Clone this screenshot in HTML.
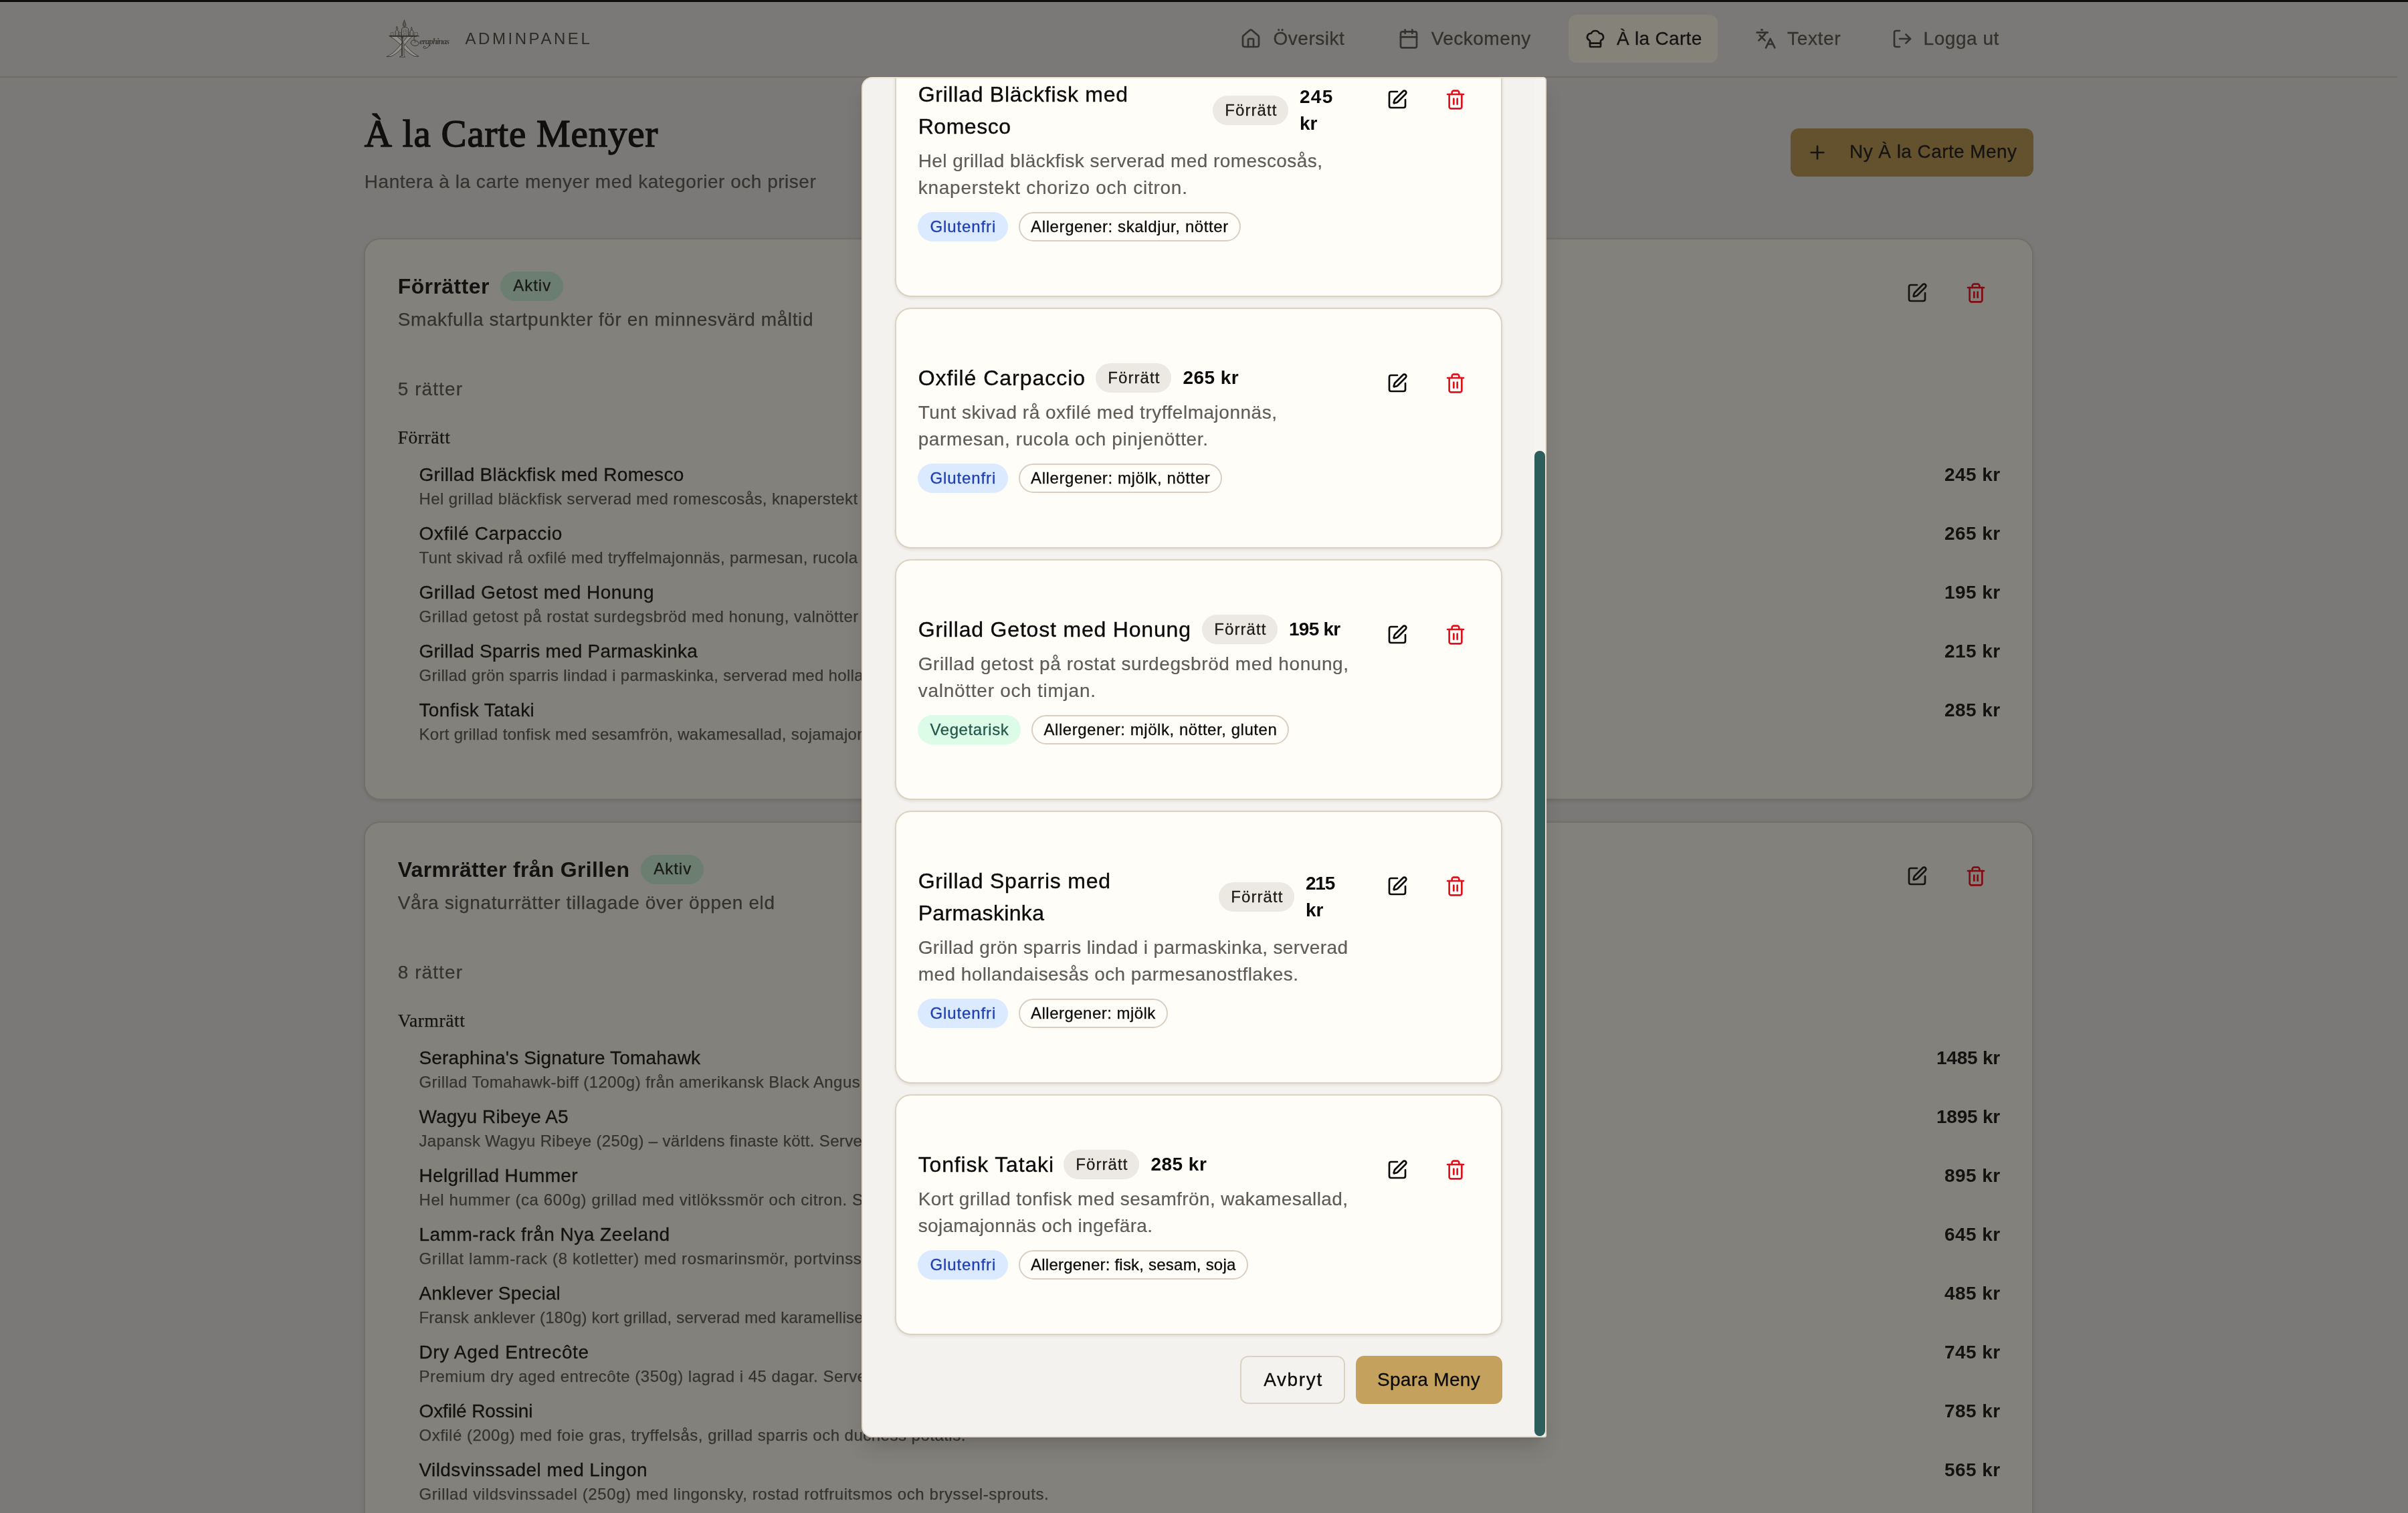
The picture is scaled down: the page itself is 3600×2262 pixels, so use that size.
<!DOCTYPE html>
<html lang="sv"><head><meta charset="utf-8"><title>À la Carte Menyer – Adminpanel</title>
<style>
html,body{margin:0;padding:0}
body{width:3600px;height:2262px;overflow:hidden;position:relative;background:#7a7977}
.s{font-family:"Liberation Sans",sans-serif}
.f{font-family:"Liberation Serif",serif}
#page{position:absolute;left:0;top:0;width:3600px;height:2262px;overflow:hidden;will-change:transform}
#modal{position:absolute;left:1288px;top:115px;width:1024px;height:2034px;box-sizing:border-box;background:#f3f2ef;border:2px solid #e6ddcf;border-radius:16px 5px 3px 16px;box-shadow:0 20px 30px -6px rgba(0,0,0,.15),0 8px 12px -8px rgba(0,0,0,.12);overflow:hidden}
#minner{position:absolute;left:-1290px;top:-117px;width:3600px;height:2262px;will-change:transform}
</style></head><body>
<div id="page"><div style="position:absolute;left:0px;top:0px;width:3600px;height:3px;background:#0e0e0e;z-index:5"></div><header><div style="position:absolute;left:0px;top:114px;width:3584px;height:2px;background:#716c65"></div><svg style="position:absolute;left:570px;top:20px" width="120" height="80" viewBox="0 0 120 80" fill="none" stroke="#2e2c28" stroke-width="0.8" stroke-linecap="round" stroke-linejoin="round">
<g fill="#918f89">
<path d="M12.700 34C19 38 25 43 29.500 47.500C34 52 40 60 50 64.300L56 64.200C47 60 40 52 35.500 46.500C31.500 42 28 38 23.800 34.500Z"/>
<path d="M46.500 34C42 38 38.500 42.500 35 47C30.500 52.500 24 60.500 14 64.500L8 64.700C17 61 24 53 28.800 47C32 43 36 38.500 39.100 34.800Z"/>
<path d="M30.700 44.500V63.300L27.200 65.200H35.800L33.800 63.300V44.500Z"/>
</g>
<path d="M11.800 33.400H55.200M13 34.500H53" stroke-width="0.9"/>
<path d="M31.300 34.500V63.500" stroke-width="1.300"/>
<path d="M30.400 33V24.200C30.400 21.800 32.800 20.800 35.600 20.800C38.400 20.800 40.700 21.800 40.700 24.200V33"/>
<path d="M34.500 10.300C33.200 13.500 32.200 15.500 32.300 17.300C32.400 19.200 33.500 20.100 34.700 20.100C36 20.100 37 19 36.900 17.300C36.800 15.300 35.400 13.500 34.500 10.300Z" fill="#5d5a55" stroke-width="0.7"/>
<path d="M21.100 33V26.500L23.400 24.600L25.900 26.500V33M23.300 19.800C22.600 21.600 22.300 22.900 22.700 23.800C23.100 24.600 24.200 24.600 24.600 23.800C25 22.900 24.300 21.500 23.300 19.800Z"/>
<path d="M43.100 33V26.500L45.400 24.600L47.800 26.500V33M45.200 20.900C44.500 22.500 44.200 23.400 44.600 24.200C45 24.900 46 24.900 46.300 24.200C46.700 23.400 46 22.400 45.200 20.900Z"/>
<path d="M14.300 33V28.600H18V33M49.700 33V28.600H54.500V33M26.800 33V28.500H29.500V33M41.600 33V28.500H42.600M33 24.500V29M36 23.800V27.500M38.400 25V30M33.500 33C33.500 30.500 35 29 36.500 30.500C37.500 31.500 37.800 32.500 37.800 33" stroke-width="0.6" opacity="0.7"/>
<path d="M29.300 34.500L31.200 39.500L33 34.500" fill="#3b3935" stroke-width="0.5"/>
<path d="M56.500 34.200C53 32.500 48 34.500 49 38.200C50 41.500 55.500 41 56 44.500C56.500 48.500 49.500 50 45.800 46.800C43.500 44.700 44.200 41.200 47 40.200C49.800 39.300 51.800 41.600 50.400 43.400M73 45C72.500 48.500 70 51.500 66.500 52.300C64 52.800 62.300 51.300 63.200 49.800C64 48.700 65.700 49 66 50.200" stroke-width="0.9"/>
</svg><span class="f" style="position:absolute;left:627px;top:52.5px;font-size:13px;line-height:18px;font-style:italic;font-weight:700;color:#403d39;letter-spacing:-1.050px;white-space:nowrap">eraphinas</span><span id="t1" class="s" style="position:absolute;left:695.50px;top:41.68px;font-size:24px;line-height:32px;color:#2c2b28;font-weight:400;letter-spacing:3.553px;white-space:nowrap;">ADMINPANEL</span><nav><div style="position:absolute;left:2345px;top:22px;width:223px;height:72px;background:#85827a;border-radius:12px"></div><svg style="position:absolute;left:1854px;top:42px" width="32" height="32" viewBox="0 0 24 24" fill="none" stroke="#34322e" stroke-width="2" stroke-linecap="round" stroke-linejoin="round"><path d="M15 21v-8a1 1 0 0 0-1-1h-4a1 1 0 0 0-1 1v8"/><path d="M3 10a2 2 0 0 1 .709-1.528l7-5.999a2 2 0 0 1 2.582 0l7 5.999A2 2 0 0 1 21 10v9a2 2 0 0 1-2 2H5a2 2 0 0 1-2-2z"/></svg><span id="t2" class="s" style="position:absolute;left:1903.50px;top:38.30px;font-size:28px;line-height:40px;color:#34322e;font-weight:400;letter-spacing:0.515px;white-space:nowrap;-webkit-text-stroke:0.3px #34322e;">Översikt</span><svg style="position:absolute;left:2089.5px;top:42.2px" width="32" height="32" viewBox="0 0 24 24" fill="none" stroke="#34322e" stroke-width="2" stroke-linecap="round" stroke-linejoin="round"><path d="M8 2v4"/><path d="M16 2v4"/><rect width="18" height="18" x="3" y="4" rx="2"/><path d="M3 10h18"/></svg><span id="t3" class="s" style="position:absolute;left:2139.70px;top:38.30px;font-size:28px;line-height:40px;color:#34322e;font-weight:400;letter-spacing:0.479px;white-space:nowrap;-webkit-text-stroke:0.3px #34322e;">Veckomeny</span><svg style="position:absolute;left:2369px;top:42px" width="32" height="32" viewBox="0 0 24 24" fill="none" stroke="#151412" stroke-width="2" stroke-linecap="round" stroke-linejoin="round"><path d="M17 21a1 1 0 0 0 1-1v-5.350c0-.457.316-.844.727-1.041a4 4 0 0 0-2.134-7.589 5 5 0 0 0-9.186 0 4 4 0 0 0-2.134 7.588c.411.198.727.585.727 1.041V20a1 1 0 0 0 1 1Z"/><path d="M6 17h12"/></svg><span id="t4" class="s" style="position:absolute;left:2417.00px;top:38.30px;font-size:28px;line-height:40px;color:#151412;font-weight:400;letter-spacing:0.308px;white-space:nowrap;-webkit-text-stroke:0.3px #151412;">À la Carte</span><svg style="position:absolute;left:2624px;top:42px" width="32" height="32" viewBox="0 0 24 24" fill="none" stroke="#34322e" stroke-width="2" stroke-linecap="round" stroke-linejoin="round"><path d="m5 8 6 6"/><path d="m4 14 6-6 2-3"/><path d="M2 5h12"/><path d="M7 2h1"/><path d="m22 22-5-10-5 10"/><path d="M14 18h6"/></svg><span id="t5" class="s" style="position:absolute;left:2672.00px;top:38.30px;font-size:28px;line-height:40px;color:#34322e;font-weight:400;letter-spacing:0.684px;white-space:nowrap;-webkit-text-stroke:0.3px #34322e;">Texter</span><svg style="position:absolute;left:2827.5px;top:42px" width="32" height="32" viewBox="0 0 24 24" fill="none" stroke="#34322e" stroke-width="2" stroke-linecap="round" stroke-linejoin="round"><path d="M9 21H5a2 2 0 0 1-2-2V5a2 2 0 0 1 2-2h4"/><polyline points="16 17 21 12 16 7"/><line x1="21" x2="9" y1="12" y2="12"/></svg><span id="t6" class="s" style="position:absolute;left:2875.60px;top:38.30px;font-size:28px;line-height:40px;color:#34322e;font-weight:400;letter-spacing:0.526px;white-space:nowrap;-webkit-text-stroke:0.3px #34322e;">Logga ut</span></nav></header><main><span id="t7" class="f" style="position:absolute;left:544.80px;top:164.16px;font-size:57px;line-height:72px;color:#100f0e;font-weight:400;letter-spacing:0.801px;white-space:nowrap;-webkit-text-stroke:1.4px #100f0e;">À la Carte Menyer</span><span id="t8" class="s" style="position:absolute;left:544.80px;top:252.30px;font-size:28px;line-height:40px;color:#353330;font-weight:400;letter-spacing:0.520px;white-space:nowrap;-webkit-text-stroke:0.25px #353330;">Hantera à la carte menyer med kategorier och priser</span><div style="position:absolute;left:2677px;top:192px;width:363px;height:72px;background:#64522f;border-radius:12px"></div><svg style="position:absolute;left:2701px;top:212px" width="32" height="32" viewBox="0 0 24 24" fill="none" stroke="#151412" stroke-width="2" stroke-linecap="round" stroke-linejoin="round"><path d="M5 12h14"/><path d="M12 5v14"/></svg><span id="t9" class="s" style="position:absolute;left:2765.10px;top:207.30px;font-size:28px;line-height:40px;color:#151412;font-weight:400;letter-spacing:0.425px;white-space:nowrap;-webkit-text-stroke:0.3px #151412;">Ny À la Carte Meny</span><section><div style="position:absolute;left:544px;top:356px;width:2496px;height:840px;box-sizing:border-box;background:#82817c;border:2px solid #736f68;border-radius:24px;box-shadow:0 2px 4px rgba(0,0,0,.10)"></div><span id="t10" class="s" style="position:absolute;left:594.70px;top:403.71px;font-size:32px;line-height:48px;color:#131211;font-weight:700;letter-spacing:0.420px;white-space:nowrap;">Förrätter</span><div style="position:absolute;left:748px;top:406px;width:93.5px;height:44px;background:#6b7e70;border-radius:22px"></div><span id="t11" class="s" style="position:absolute;left:767.30px;top:411.48px;font-size:24px;line-height:32px;color:#1a1a18;font-weight:400;letter-spacing:0.956px;white-space:nowrap;-webkit-text-stroke:0.3px #1a1a18;">Aktiv</span><span id="t12" class="s" style="position:absolute;left:594.70px;top:458.10px;font-size:28px;line-height:40px;color:#353330;font-weight:400;letter-spacing:0.606px;white-space:nowrap;-webkit-text-stroke:0.25px #353330;">Smakfulla startpunkter för en minnesvärd måltid</span><svg style="position:absolute;left:2850px;top:422px" width="32" height="32" viewBox="0 0 24 24" fill="none" stroke="#151412" stroke-width="2" stroke-linecap="round" stroke-linejoin="round"><path d="M12 3H5a2 2 0 0 0-2 2v14a2 2 0 0 0 2 2h14a2 2 0 0 0 2-2v-7"/><path d="M18.375 2.625a1 1 0 0 1 3 3l-9.013 9.014a2 2 0 0 1-.853.505l-2.873.84a.5.5 0 0 1-.62-.62l.84-2.873a2 2 0 0 1 .506-.852z"/></svg><svg style="position:absolute;left:2938px;top:421.7px" width="32" height="32" viewBox="0 0 24 24" fill="none" stroke="#820a10" stroke-width="2" stroke-linecap="round" stroke-linejoin="round"><path d="M3 6h18"/><path d="M19 6v14c0 1-1 2-2 2H7c-1 0-2-1-2-2V6"/><path d="M8 6V4c0-1 1-2 2-2h4c1 0 2 1 2 2v2"/><line x1="10" x2="10" y1="11" y2="17"/><line x1="14" x2="14" y1="11" y2="17"/></svg><span id="t13" class="s" style="position:absolute;left:594.70px;top:562.00px;font-size:28px;line-height:40px;color:#353330;font-weight:400;letter-spacing:1.082px;white-space:nowrap;-webkit-text-stroke:0.25px #353330;">5 rätter</span><span id="t14" class="f" style="position:absolute;left:594.70px;top:634.02px;font-size:27.5px;line-height:40px;color:#151412;font-weight:400;letter-spacing:0.571px;white-space:nowrap;-webkit-text-stroke:0.25px #151412;">Förrätt</span><span id="t15" class="s" style="position:absolute;left:626.50px;top:689.70px;font-size:28px;line-height:40px;color:#131211;font-weight:400;letter-spacing:0.298px;white-space:nowrap;-webkit-text-stroke:0.3px #131211;">Grillad Bläckfisk med Romesco</span><span id="t16" class="s" style="position:absolute;left:626.50px;top:730.28px;font-size:24px;line-height:32px;color:#353330;font-weight:400;letter-spacing:0.410px;white-space:nowrap;-webkit-text-stroke:0.25px #353330;">Hel grillad bläckfisk serverad med romescosås, knaperstekt chorizo och citron.</span><span id="t17" class="s" style="position:absolute;right:609.80px;top:689.70px;font-size:28px;line-height:40px;color:#131211;font-weight:700;letter-spacing:0.461px;white-space:nowrap;margin-right:-0.461px;">245 kr</span><span id="t18" class="s" style="position:absolute;left:626.50px;top:777.70px;font-size:28px;line-height:40px;color:#131211;font-weight:400;letter-spacing:0.558px;white-space:nowrap;-webkit-text-stroke:0.3px #131211;">Oxfilé Carpaccio</span><span id="t19" class="s" style="position:absolute;left:626.50px;top:818.28px;font-size:24px;line-height:32px;color:#353330;font-weight:400;letter-spacing:0.380px;white-space:nowrap;-webkit-text-stroke:0.25px #353330;">Tunt skivad rå oxfilé med tryffelmajonnäs, parmesan, rucola och pinjenötter.</span><span id="t20" class="s" style="position:absolute;right:609.80px;top:777.70px;font-size:28px;line-height:40px;color:#131211;font-weight:700;letter-spacing:0.461px;white-space:nowrap;margin-right:-0.461px;">265 kr</span><span id="t21" class="s" style="position:absolute;left:626.50px;top:865.70px;font-size:28px;line-height:40px;color:#131211;font-weight:400;letter-spacing:0.487px;white-space:nowrap;-webkit-text-stroke:0.3px #131211;">Grillad Getost med Honung</span><span id="t22" class="s" style="position:absolute;left:626.50px;top:906.28px;font-size:24px;line-height:32px;color:#353330;font-weight:400;letter-spacing:0.523px;white-space:nowrap;-webkit-text-stroke:0.25px #353330;">Grillad getost på rostat surdegsbröd med honung, valnötter och timjan.</span><span id="t23" class="s" style="position:absolute;right:609.80px;top:865.70px;font-size:28px;line-height:40px;color:#131211;font-weight:700;letter-spacing:0.461px;white-space:nowrap;margin-right:-0.461px;">195 kr</span><span id="t24" class="s" style="position:absolute;left:626.50px;top:953.70px;font-size:28px;line-height:40px;color:#131211;font-weight:400;letter-spacing:0.234px;white-space:nowrap;-webkit-text-stroke:0.3px #131211;">Grillad Sparris med Parmaskinka</span><span id="t25" class="s" style="position:absolute;left:626.50px;top:994.28px;font-size:24px;line-height:32px;color:#353330;font-weight:400;letter-spacing:0.307px;white-space:nowrap;-webkit-text-stroke:0.25px #353330;">Grillad grön sparris lindad i parmaskinka, serverad med hollandaisesås och parmesanostflakes.</span><span id="t26" class="s" style="position:absolute;right:609.80px;top:953.70px;font-size:28px;line-height:40px;color:#131211;font-weight:700;letter-spacing:0.461px;white-space:nowrap;margin-right:-0.461px;">215 kr</span><span id="t27" class="s" style="position:absolute;left:626.50px;top:1041.70px;font-size:28px;line-height:40px;color:#131211;font-weight:400;letter-spacing:0.362px;white-space:nowrap;-webkit-text-stroke:0.3px #131211;">Tonfisk Tataki</span><span id="t28" class="s" style="position:absolute;left:626.50px;top:1082.28px;font-size:24px;line-height:32px;color:#353330;font-weight:400;letter-spacing:0.294px;white-space:nowrap;-webkit-text-stroke:0.25px #353330;">Kort grillad tonfisk med sesamfrön, wakamesallad, sojamajonnäs och ingefära.</span><span id="t29" class="s" style="position:absolute;right:609.80px;top:1041.70px;font-size:28px;line-height:40px;color:#131211;font-weight:700;letter-spacing:0.461px;white-space:nowrap;margin-right:-0.461px;">285 kr</span></section><section><div style="position:absolute;left:544px;top:1228px;width:2496px;height:1200px;box-sizing:border-box;background:#82817c;border:2px solid #736f68;border-radius:24px;box-shadow:0 2px 4px rgba(0,0,0,.10)"></div><span id="t30" class="s" style="position:absolute;left:594.70px;top:1275.71px;font-size:32px;line-height:48px;color:#131211;font-weight:700;letter-spacing:0.301px;white-space:nowrap;">Varmrätter från Grillen</span><div style="position:absolute;left:958px;top:1278px;width:93.5px;height:44px;background:#6b7e70;border-radius:22px"></div><span id="t31" class="s" style="position:absolute;left:977.30px;top:1283.48px;font-size:24px;line-height:32px;color:#1a1a18;font-weight:400;letter-spacing:0.956px;white-space:nowrap;-webkit-text-stroke:0.3px #1a1a18;">Aktiv</span><span id="t32" class="s" style="position:absolute;left:594.70px;top:1330.10px;font-size:28px;line-height:40px;color:#353330;font-weight:400;letter-spacing:0.611px;white-space:nowrap;-webkit-text-stroke:0.25px #353330;">Våra signaturrätter tillagade över öppen eld</span><svg style="position:absolute;left:2850px;top:1294px" width="32" height="32" viewBox="0 0 24 24" fill="none" stroke="#151412" stroke-width="2" stroke-linecap="round" stroke-linejoin="round"><path d="M12 3H5a2 2 0 0 0-2 2v14a2 2 0 0 0 2 2h14a2 2 0 0 0 2-2v-7"/><path d="M18.375 2.625a1 1 0 0 1 3 3l-9.013 9.014a2 2 0 0 1-.853.505l-2.873.84a.5.5 0 0 1-.62-.62l.84-2.873a2 2 0 0 1 .506-.852z"/></svg><svg style="position:absolute;left:2938px;top:1293.7px" width="32" height="32" viewBox="0 0 24 24" fill="none" stroke="#820a10" stroke-width="2" stroke-linecap="round" stroke-linejoin="round"><path d="M3 6h18"/><path d="M19 6v14c0 1-1 2-2 2H7c-1 0-2-1-2-2V6"/><path d="M8 6V4c0-1 1-2 2-2h4c1 0 2 1 2 2v2"/><line x1="10" x2="10" y1="11" y2="17"/><line x1="14" x2="14" y1="11" y2="17"/></svg><span id="t33" class="s" style="position:absolute;left:594.70px;top:1434.00px;font-size:28px;line-height:40px;color:#353330;font-weight:400;letter-spacing:1.082px;white-space:nowrap;-webkit-text-stroke:0.25px #353330;">8 rätter</span><span id="t34" class="f" style="position:absolute;left:594.70px;top:1506.02px;font-size:27.5px;line-height:40px;color:#151412;font-weight:400;letter-spacing:0.579px;white-space:nowrap;-webkit-text-stroke:0.25px #151412;">Varmrätt</span><span id="t35" class="s" style="position:absolute;left:626.50px;top:1561.70px;font-size:28px;line-height:40px;color:#131211;font-weight:400;letter-spacing:0.166px;white-space:nowrap;-webkit-text-stroke:0.3px #131211;">Seraphina's Signature Tomahawk</span><span id="t36" class="s" style="position:absolute;left:626.50px;top:1602.28px;font-size:24px;line-height:32px;color:#353330;font-weight:400;letter-spacing:0.424px;white-space:nowrap;-webkit-text-stroke:0.25px #353330;">Grillad Tomahawk-biff (1200g) från amerikansk Black Angus. Serveras med rostad vitlök och tre såser.</span><span id="t37" class="s" style="position:absolute;right:609.80px;top:1561.70px;font-size:28px;line-height:40px;color:#131211;font-weight:700;letter-spacing:-0.210px;white-space:nowrap;margin-right:0.210px;">1485 kr</span><span id="t38" class="s" style="position:absolute;left:626.50px;top:1649.70px;font-size:28px;line-height:40px;color:#131211;font-weight:400;letter-spacing:0.118px;white-space:nowrap;-webkit-text-stroke:0.3px #131211;">Wagyu Ribeye A5</span><span id="t39" class="s" style="position:absolute;left:626.50px;top:1690.28px;font-size:24px;line-height:32px;color:#353330;font-weight:400;letter-spacing:0.332px;white-space:nowrap;-webkit-text-stroke:0.25px #353330;">Japansk Wagyu Ribeye (250g) – världens finaste kött. Serveras med wasabi, havssalt och ponzu.</span><span id="t40" class="s" style="position:absolute;right:609.80px;top:1649.70px;font-size:28px;line-height:40px;color:#131211;font-weight:700;letter-spacing:-0.210px;white-space:nowrap;margin-right:0.210px;">1895 kr</span><span id="t41" class="s" style="position:absolute;left:626.50px;top:1737.70px;font-size:28px;line-height:40px;color:#131211;font-weight:400;letter-spacing:0.327px;white-space:nowrap;-webkit-text-stroke:0.3px #131211;">Helgrillad Hummer</span><span id="t42" class="s" style="position:absolute;left:626.50px;top:1778.28px;font-size:24px;line-height:32px;color:#353330;font-weight:400;letter-spacing:0.596px;white-space:nowrap;-webkit-text-stroke:0.25px #353330;">Hel hummer (ca 600g) grillad med vitlökssmör och citron. Serveras med pommes frites och aioli.</span><span id="t43" class="s" style="position:absolute;right:609.80px;top:1737.70px;font-size:28px;line-height:40px;color:#131211;font-weight:700;letter-spacing:0.461px;white-space:nowrap;margin-right:-0.461px;">895 kr</span><span id="t44" class="s" style="position:absolute;left:626.50px;top:1825.70px;font-size:28px;line-height:40px;color:#131211;font-weight:400;letter-spacing:0.480px;white-space:nowrap;-webkit-text-stroke:0.3px #131211;">Lamm-rack från Nya Zeeland</span><span id="t45" class="s" style="position:absolute;left:626.50px;top:1866.28px;font-size:24px;line-height:32px;color:#353330;font-weight:400;letter-spacing:0.642px;white-space:nowrap;-webkit-text-stroke:0.25px #353330;">Grillat lamm-rack (8 kotletter) med rosmarinsmör, portvinssås och rostad potatis.</span><span id="t46" class="s" style="position:absolute;right:609.80px;top:1825.70px;font-size:28px;line-height:40px;color:#131211;font-weight:700;letter-spacing:0.461px;white-space:nowrap;margin-right:-0.461px;">645 kr</span><span id="t47" class="s" style="position:absolute;left:626.50px;top:1913.70px;font-size:28px;line-height:40px;color:#131211;font-weight:400;letter-spacing:0.182px;white-space:nowrap;-webkit-text-stroke:0.3px #131211;">Anklever Special</span><span id="t48" class="s" style="position:absolute;left:626.50px;top:1954.28px;font-size:24px;line-height:32px;color:#353330;font-weight:400;letter-spacing:0.198px;white-space:nowrap;-webkit-text-stroke:0.25px #353330;">Fransk anklever (180g) kort grillad, serverad med karamelliserade äpplen och brioche.</span><span id="t49" class="s" style="position:absolute;right:609.80px;top:1913.70px;font-size:28px;line-height:40px;color:#131211;font-weight:700;letter-spacing:0.461px;white-space:nowrap;margin-right:-0.461px;">485 kr</span><span id="t50" class="s" style="position:absolute;left:626.50px;top:2001.70px;font-size:28px;line-height:40px;color:#131211;font-weight:400;letter-spacing:0.634px;white-space:nowrap;-webkit-text-stroke:0.3px #131211;">Dry Aged Entrecôte</span><span id="t51" class="s" style="position:absolute;left:626.50px;top:2042.28px;font-size:24px;line-height:32px;color:#353330;font-weight:400;letter-spacing:0.495px;white-space:nowrap;-webkit-text-stroke:0.25px #353330;">Premium dry aged entrecôte (350g) lagrad i 45 dagar. Serveras med bearnaise och pommes.</span><span id="t52" class="s" style="position:absolute;right:609.80px;top:2001.70px;font-size:28px;line-height:40px;color:#131211;font-weight:700;letter-spacing:0.461px;white-space:nowrap;margin-right:-0.461px;">745 kr</span><span id="t53" class="s" style="position:absolute;left:626.50px;top:2089.70px;font-size:28px;line-height:40px;color:#131211;font-weight:400;letter-spacing:-0.099px;white-space:nowrap;-webkit-text-stroke:0.3px #131211;">Oxfilé Rossini</span><span id="t54" class="s" style="position:absolute;left:626.50px;top:2130.28px;font-size:24px;line-height:32px;color:#353330;font-weight:400;letter-spacing:0.486px;white-space:nowrap;-webkit-text-stroke:0.25px #353330;">Oxfilé (200g) med foie gras, tryffelsås, grillad sparris och duchess potatis.</span><span id="t55" class="s" style="position:absolute;right:609.80px;top:2089.70px;font-size:28px;line-height:40px;color:#131211;font-weight:700;letter-spacing:0.461px;white-space:nowrap;margin-right:-0.461px;">785 kr</span><span id="t56" class="s" style="position:absolute;left:626.50px;top:2177.70px;font-size:28px;line-height:40px;color:#131211;font-weight:400;letter-spacing:0.415px;white-space:nowrap;-webkit-text-stroke:0.3px #131211;">Vildsvinssadel med Lingon</span><span id="t57" class="s" style="position:absolute;left:626.50px;top:2218.28px;font-size:24px;line-height:32px;color:#353330;font-weight:400;letter-spacing:0.587px;white-space:nowrap;-webkit-text-stroke:0.25px #353330;">Grillad vildsvinssadel (250g) med lingonsky, rostad rotfruitsmos och bryssel-sprouts.</span><span id="t58" class="s" style="position:absolute;right:609.80px;top:2177.70px;font-size:28px;line-height:40px;color:#131211;font-weight:700;letter-spacing:0.461px;white-space:nowrap;margin-right:-0.461px;">565 kr</span></section></main></div>
<div id="modal" role="dialog" aria-modal="true" aria-label="Redigera meny"><div id="minner"><article><div style="position:absolute;left:1338px;top:36px;width:908px;height:408px;box-sizing:border-box;background:#fffdf8;border:2px solid #dcd2c2;border-radius:24px;box-shadow:0 2px 4px rgba(60,40,10,.10)"></div><span id="t59" class="s" style="position:absolute;left:1372.70px;top:117.11px;font-size:32px;line-height:48px;color:#0b0b0b;font-weight:400;letter-spacing:0.728px;white-space:nowrap;-webkit-text-stroke:0.35px #0b0b0b;">Grillad Bläckfisk med</span><span id="t60" class="s" style="position:absolute;left:1372.70px;top:165.11px;font-size:32px;line-height:48px;color:#0b0b0b;font-weight:400;letter-spacing:0.525px;white-space:nowrap;-webkit-text-stroke:0.35px #0b0b0b;">Romesco</span><div style="position:absolute;left:1813px;top:142.5px;width:113.4px;height:44px;background:#ece8e2;border-radius:22px"></div><span id="t61" class="s" style="position:absolute;left:1831.30px;top:148.78px;font-size:24px;line-height:32px;color:#1a1a18;font-weight:400;letter-spacing:1.060px;white-space:nowrap;-webkit-text-stroke:0.3px #1a1a18;">Förrätt</span><span id="t62" class="s" style="position:absolute;left:1943.00px;top:125.20px;font-size:28px;line-height:40px;color:#0b0b0b;font-weight:700;letter-spacing:1.276px;white-space:nowrap;">245</span><span id="t63" class="s" style="position:absolute;left:1943.00px;top:165.20px;font-size:28px;line-height:40px;color:#0b0b0b;font-weight:700;letter-spacing:0.052px;white-space:nowrap;">kr</span><svg style="position:absolute;left:2072.5px;top:132.5px" width="32" height="32" viewBox="0 0 24 24" fill="none" stroke="#0b0b0b" stroke-width="2" stroke-linecap="round" stroke-linejoin="round"><path d="M12 3H5a2 2 0 0 0-2 2v14a2 2 0 0 0 2 2h14a2 2 0 0 0 2-2v-7"/><path d="M18.375 2.625a1 1 0 0 1 3 3l-9.013 9.014a2 2 0 0 1-.853.505l-2.873.84a.5.5 0 0 1-.62-.62l.84-2.873a2 2 0 0 1 .506-.852z"/></svg><svg style="position:absolute;left:2160px;top:132.5px" width="32" height="32" viewBox="0 0 24 24" fill="none" stroke="#e0101c" stroke-width="2" stroke-linecap="round" stroke-linejoin="round"><path d="M3 6h18"/><path d="M19 6v14c0 1-1 2-2 2H7c-1 0-2-1-2-2V6"/><path d="M8 6V4c0-1 1-2 2-2h4c1 0 2 1 2 2v2"/><line x1="10" x2="10" y1="11" y2="17"/><line x1="14" x2="14" y1="11" y2="17"/></svg><span id="t64" class="s" style="position:absolute;left:1372.70px;top:221.20px;font-size:28px;line-height:40px;color:#5f5c57;font-weight:400;letter-spacing:0.426px;white-space:nowrap;-webkit-text-stroke:0.2px #5f5c57;">Hel grillad bläckfisk serverad med romescosås,</span><span id="t65" class="s" style="position:absolute;left:1372.70px;top:261.20px;font-size:28px;line-height:40px;color:#5f5c57;font-weight:400;letter-spacing:0.751px;white-space:nowrap;-webkit-text-stroke:0.2px #5f5c57;">knaperstekt chorizo och citron.</span><div style="position:absolute;left:1372px;top:316.5px;width:134.6px;height:44px;background:#dbeafe;border-radius:22px"></div><span id="t66" class="s" style="position:absolute;left:1390.50px;top:322.78px;font-size:24px;line-height:32px;color:#1e3fae;font-weight:400;letter-spacing:0.892px;white-space:nowrap;-webkit-text-stroke:0.3px #1e3fae;">Glutenfri</span><div style="position:absolute;left:1522.6px;top:316.5px;width:332px;height:44px;box-sizing:border-box;border:2px solid #d9cfc0;border-radius:22px;background:#fffdf8"></div><span id="t67" class="s" style="position:absolute;left:1541.10px;top:322.78px;font-size:24px;line-height:32px;color:#0b0b0b;font-weight:400;letter-spacing:0.608px;white-space:nowrap;-webkit-text-stroke:0.3px #0b0b0b;">Allergener: skaldjur, nötter</span></article><article><div style="position:absolute;left:1338px;top:460px;width:908px;height:360px;box-sizing:border-box;background:#fffdf8;border:2px solid #dcd2c2;border-radius:24px;box-shadow:0 2px 4px rgba(60,40,10,.10)"></div><span id="t68" class="s" style="position:absolute;left:1372.70px;top:541.11px;font-size:32px;line-height:48px;color:#0b0b0b;font-weight:400;letter-spacing:0.971px;white-space:nowrap;-webkit-text-stroke:0.35px #0b0b0b;">Oxfilé Carpaccio</span><div style="position:absolute;left:1638px;top:542.5px;width:113.4px;height:44px;background:#ece8e2;border-radius:22px"></div><span id="t69" class="s" style="position:absolute;left:1656.30px;top:548.78px;font-size:24px;line-height:32px;color:#1a1a18;font-weight:400;letter-spacing:1.060px;white-space:nowrap;-webkit-text-stroke:0.3px #1a1a18;">Förrätt</span><span id="t70" class="s" style="position:absolute;left:1768.50px;top:545.20px;font-size:28px;line-height:40px;color:#0b0b0b;font-weight:700;letter-spacing:0.460px;white-space:nowrap;">265 kr</span><svg style="position:absolute;left:2072.5px;top:556.5px" width="32" height="32" viewBox="0 0 24 24" fill="none" stroke="#0b0b0b" stroke-width="2" stroke-linecap="round" stroke-linejoin="round"><path d="M12 3H5a2 2 0 0 0-2 2v14a2 2 0 0 0 2 2h14a2 2 0 0 0 2-2v-7"/><path d="M18.375 2.625a1 1 0 0 1 3 3l-9.013 9.014a2 2 0 0 1-.853.505l-2.873.84a.5.5 0 0 1-.62-.62l.84-2.873a2 2 0 0 1 .506-.852z"/></svg><svg style="position:absolute;left:2160px;top:556.5px" width="32" height="32" viewBox="0 0 24 24" fill="none" stroke="#e0101c" stroke-width="2" stroke-linecap="round" stroke-linejoin="round"><path d="M3 6h18"/><path d="M19 6v14c0 1-1 2-2 2H7c-1 0-2-1-2-2V6"/><path d="M8 6V4c0-1 1-2 2-2h4c1 0 2 1 2 2v2"/><line x1="10" x2="10" y1="11" y2="17"/><line x1="14" x2="14" y1="11" y2="17"/></svg><span id="t71" class="s" style="position:absolute;left:1372.70px;top:597.20px;font-size:28px;line-height:40px;color:#5f5c57;font-weight:400;letter-spacing:0.516px;white-space:nowrap;-webkit-text-stroke:0.2px #5f5c57;">Tunt skivad rå oxfilé med tryffelmajonnäs,</span><span id="t72" class="s" style="position:absolute;left:1372.70px;top:637.20px;font-size:28px;line-height:40px;color:#5f5c57;font-weight:400;letter-spacing:0.601px;white-space:nowrap;-webkit-text-stroke:0.2px #5f5c57;">parmesan, rucola och pinjenötter.</span><div style="position:absolute;left:1372px;top:692.5px;width:134.6px;height:44px;background:#dbeafe;border-radius:22px"></div><span id="t73" class="s" style="position:absolute;left:1390.50px;top:698.78px;font-size:24px;line-height:32px;color:#1e3fae;font-weight:400;letter-spacing:0.892px;white-space:nowrap;-webkit-text-stroke:0.3px #1e3fae;">Glutenfri</span><div style="position:absolute;left:1522.6px;top:692.5px;width:304.5px;height:44px;box-sizing:border-box;border:2px solid #d9cfc0;border-radius:22px;background:#fffdf8"></div><span id="t74" class="s" style="position:absolute;left:1541.10px;top:698.78px;font-size:24px;line-height:32px;color:#0b0b0b;font-weight:400;letter-spacing:0.595px;white-space:nowrap;-webkit-text-stroke:0.3px #0b0b0b;">Allergener: mjölk, nötter</span></article><article><div style="position:absolute;left:1338px;top:836px;width:908px;height:360px;box-sizing:border-box;background:#fffdf8;border:2px solid #dcd2c2;border-radius:24px;box-shadow:0 2px 4px rgba(60,40,10,.10)"></div><span id="t75" class="s" style="position:absolute;left:1372.70px;top:917.11px;font-size:32px;line-height:48px;color:#0b0b0b;font-weight:400;letter-spacing:0.815px;white-space:nowrap;-webkit-text-stroke:0.35px #0b0b0b;">Grillad Getost med Honung</span><div style="position:absolute;left:1797px;top:918.5px;width:113.4px;height:44px;background:#ece8e2;border-radius:22px"></div><span id="t76" class="s" style="position:absolute;left:1815.30px;top:924.78px;font-size:24px;line-height:32px;color:#1a1a18;font-weight:400;letter-spacing:1.060px;white-space:nowrap;-webkit-text-stroke:0.3px #1a1a18;">Förrätt</span><span id="t77" class="s" style="position:absolute;left:1927.00px;top:921.20px;font-size:28px;line-height:40px;color:#0b0b0b;font-weight:700;letter-spacing:-0.739px;white-space:nowrap;">195 kr</span><svg style="position:absolute;left:2072.5px;top:932.5px" width="32" height="32" viewBox="0 0 24 24" fill="none" stroke="#0b0b0b" stroke-width="2" stroke-linecap="round" stroke-linejoin="round"><path d="M12 3H5a2 2 0 0 0-2 2v14a2 2 0 0 0 2 2h14a2 2 0 0 0 2-2v-7"/><path d="M18.375 2.625a1 1 0 0 1 3 3l-9.013 9.014a2 2 0 0 1-.853.505l-2.873.84a.5.5 0 0 1-.62-.62l.84-2.873a2 2 0 0 1 .506-.852z"/></svg><svg style="position:absolute;left:2160px;top:932.5px" width="32" height="32" viewBox="0 0 24 24" fill="none" stroke="#e0101c" stroke-width="2" stroke-linecap="round" stroke-linejoin="round"><path d="M3 6h18"/><path d="M19 6v14c0 1-1 2-2 2H7c-1 0-2-1-2-2V6"/><path d="M8 6V4c0-1 1-2 2-2h4c1 0 2 1 2 2v2"/><line x1="10" x2="10" y1="11" y2="17"/><line x1="14" x2="14" y1="11" y2="17"/></svg><span id="t78" class="s" style="position:absolute;left:1372.70px;top:973.20px;font-size:28px;line-height:40px;color:#5f5c57;font-weight:400;letter-spacing:0.573px;white-space:nowrap;-webkit-text-stroke:0.2px #5f5c57;">Grillad getost på rostat surdegsbröd med honung,</span><span id="t79" class="s" style="position:absolute;left:1372.70px;top:1013.20px;font-size:28px;line-height:40px;color:#5f5c57;font-weight:400;letter-spacing:0.736px;white-space:nowrap;-webkit-text-stroke:0.2px #5f5c57;">valnötter och timjan.</span><div style="position:absolute;left:1372px;top:1068.5px;width:154px;height:44px;background:#dcfce7;border-radius:22px"></div><span id="t80" class="s" style="position:absolute;left:1390.50px;top:1074.78px;font-size:24px;line-height:32px;color:#25584f;font-weight:400;letter-spacing:0.574px;white-space:nowrap;-webkit-text-stroke:0.3px #25584f;">Vegetarisk</span><div style="position:absolute;left:1542px;top:1068.5px;width:385px;height:44px;box-sizing:border-box;border:2px solid #d9cfc0;border-radius:22px;background:#fffdf8"></div><span id="t81" class="s" style="position:absolute;left:1560.50px;top:1074.78px;font-size:24px;line-height:32px;color:#0b0b0b;font-weight:400;letter-spacing:0.544px;white-space:nowrap;-webkit-text-stroke:0.3px #0b0b0b;">Allergener: mjölk, nötter, gluten</span></article><article><div style="position:absolute;left:1338px;top:1212px;width:908px;height:408px;box-sizing:border-box;background:#fffdf8;border:2px solid #dcd2c2;border-radius:24px;box-shadow:0 2px 4px rgba(60,40,10,.10)"></div><span id="t82" class="s" style="position:absolute;left:1372.70px;top:1293.11px;font-size:32px;line-height:48px;color:#0b0b0b;font-weight:400;letter-spacing:0.747px;white-space:nowrap;-webkit-text-stroke:0.35px #0b0b0b;">Grillad Sparris med</span><span id="t83" class="s" style="position:absolute;left:1372.70px;top:1341.11px;font-size:32px;line-height:48px;color:#0b0b0b;font-weight:400;letter-spacing:0.336px;white-space:nowrap;-webkit-text-stroke:0.35px #0b0b0b;">Parmaskinka</span><div style="position:absolute;left:1822px;top:1318.5px;width:113.4px;height:44px;background:#ece8e2;border-radius:22px"></div><span id="t84" class="s" style="position:absolute;left:1840.30px;top:1324.78px;font-size:24px;line-height:32px;color:#1a1a18;font-weight:400;letter-spacing:1.060px;white-space:nowrap;-webkit-text-stroke:0.3px #1a1a18;">Förrätt</span><span id="t85" class="s" style="position:absolute;left:1952.00px;top:1301.20px;font-size:28px;line-height:40px;color:#0b0b0b;font-weight:700;letter-spacing:-1.224px;white-space:nowrap;">215</span><span id="t86" class="s" style="position:absolute;left:1952.00px;top:1341.20px;font-size:28px;line-height:40px;color:#0b0b0b;font-weight:700;letter-spacing:0.052px;white-space:nowrap;">kr</span><svg style="position:absolute;left:2072.5px;top:1308.5px" width="32" height="32" viewBox="0 0 24 24" fill="none" stroke="#0b0b0b" stroke-width="2" stroke-linecap="round" stroke-linejoin="round"><path d="M12 3H5a2 2 0 0 0-2 2v14a2 2 0 0 0 2 2h14a2 2 0 0 0 2-2v-7"/><path d="M18.375 2.625a1 1 0 0 1 3 3l-9.013 9.014a2 2 0 0 1-.853.505l-2.873.84a.5.5 0 0 1-.62-.62l.84-2.873a2 2 0 0 1 .506-.852z"/></svg><svg style="position:absolute;left:2160px;top:1308.5px" width="32" height="32" viewBox="0 0 24 24" fill="none" stroke="#e0101c" stroke-width="2" stroke-linecap="round" stroke-linejoin="round"><path d="M3 6h18"/><path d="M19 6v14c0 1-1 2-2 2H7c-1 0-2-1-2-2V6"/><path d="M8 6V4c0-1 1-2 2-2h4c1 0 2 1 2 2v2"/><line x1="10" x2="10" y1="11" y2="17"/><line x1="14" x2="14" y1="11" y2="17"/></svg><span id="t87" class="s" style="position:absolute;left:1372.70px;top:1397.20px;font-size:28px;line-height:40px;color:#5f5c57;font-weight:400;letter-spacing:0.365px;white-space:nowrap;-webkit-text-stroke:0.2px #5f5c57;">Grillad grön sparris lindad i parmaskinka, serverad</span><span id="t88" class="s" style="position:absolute;left:1372.70px;top:1437.20px;font-size:28px;line-height:40px;color:#5f5c57;font-weight:400;letter-spacing:0.432px;white-space:nowrap;-webkit-text-stroke:0.2px #5f5c57;">med hollandaisesås och parmesanostflakes.</span><div style="position:absolute;left:1372px;top:1492.5px;width:134.6px;height:44px;background:#dbeafe;border-radius:22px"></div><span id="t89" class="s" style="position:absolute;left:1390.50px;top:1498.78px;font-size:24px;line-height:32px;color:#1e3fae;font-weight:400;letter-spacing:0.892px;white-space:nowrap;-webkit-text-stroke:0.3px #1e3fae;">Glutenfri</span><div style="position:absolute;left:1522.6px;top:1492.5px;width:223px;height:44px;box-sizing:border-box;border:2px solid #d9cfc0;border-radius:22px;background:#fffdf8"></div><span id="t90" class="s" style="position:absolute;left:1541.10px;top:1498.78px;font-size:24px;line-height:32px;color:#0b0b0b;font-weight:400;letter-spacing:0.468px;white-space:nowrap;-webkit-text-stroke:0.3px #0b0b0b;">Allergener: mjölk</span></article><article><div style="position:absolute;left:1338px;top:1636px;width:908px;height:360px;box-sizing:border-box;background:#fffdf8;border:2px solid #dcd2c2;border-radius:24px;box-shadow:0 2px 4px rgba(60,40,10,.10)"></div><span id="t91" class="s" style="position:absolute;left:1372.70px;top:1717.11px;font-size:32px;line-height:48px;color:#0b0b0b;font-weight:400;letter-spacing:0.832px;white-space:nowrap;-webkit-text-stroke:0.35px #0b0b0b;">Tonfisk Tataki</span><div style="position:absolute;left:1590px;top:1718.5px;width:113.4px;height:44px;background:#ece8e2;border-radius:22px"></div><span id="t92" class="s" style="position:absolute;left:1608.30px;top:1724.78px;font-size:24px;line-height:32px;color:#1a1a18;font-weight:400;letter-spacing:1.060px;white-space:nowrap;-webkit-text-stroke:0.3px #1a1a18;">Förrätt</span><span id="t93" class="s" style="position:absolute;left:1720.50px;top:1721.20px;font-size:28px;line-height:40px;color:#0b0b0b;font-weight:700;letter-spacing:0.462px;white-space:nowrap;">285 kr</span><svg style="position:absolute;left:2072.5px;top:1732.5px" width="32" height="32" viewBox="0 0 24 24" fill="none" stroke="#0b0b0b" stroke-width="2" stroke-linecap="round" stroke-linejoin="round"><path d="M12 3H5a2 2 0 0 0-2 2v14a2 2 0 0 0 2 2h14a2 2 0 0 0 2-2v-7"/><path d="M18.375 2.625a1 1 0 0 1 3 3l-9.013 9.014a2 2 0 0 1-.853.505l-2.873.84a.5.5 0 0 1-.62-.62l.84-2.873a2 2 0 0 1 .506-.852z"/></svg><svg style="position:absolute;left:2160px;top:1732.5px" width="32" height="32" viewBox="0 0 24 24" fill="none" stroke="#e0101c" stroke-width="2" stroke-linecap="round" stroke-linejoin="round"><path d="M3 6h18"/><path d="M19 6v14c0 1-1 2-2 2H7c-1 0-2-1-2-2V6"/><path d="M8 6V4c0-1 1-2 2-2h4c1 0 2 1 2 2v2"/><line x1="10" x2="10" y1="11" y2="17"/><line x1="14" x2="14" y1="11" y2="17"/></svg><span id="t94" class="s" style="position:absolute;left:1372.70px;top:1773.20px;font-size:28px;line-height:40px;color:#5f5c57;font-weight:400;letter-spacing:0.380px;white-space:nowrap;-webkit-text-stroke:0.2px #5f5c57;">Kort grillad tonfisk med sesamfrön, wakamesallad,</span><span id="t95" class="s" style="position:absolute;left:1372.70px;top:1813.20px;font-size:28px;line-height:40px;color:#5f5c57;font-weight:400;letter-spacing:0.314px;white-space:nowrap;-webkit-text-stroke:0.2px #5f5c57;">sojamajonnäs och ingefära.</span><div style="position:absolute;left:1372px;top:1868.5px;width:134.6px;height:44px;background:#dbeafe;border-radius:22px"></div><span id="t96" class="s" style="position:absolute;left:1390.50px;top:1874.78px;font-size:24px;line-height:32px;color:#1e3fae;font-weight:400;letter-spacing:0.892px;white-space:nowrap;-webkit-text-stroke:0.3px #1e3fae;">Glutenfri</span><div style="position:absolute;left:1522.6px;top:1868.5px;width:343px;height:44px;box-sizing:border-box;border:2px solid #d9cfc0;border-radius:22px;background:#fffdf8"></div><span id="t97" class="s" style="position:absolute;left:1541.10px;top:1874.78px;font-size:24px;line-height:32px;color:#0b0b0b;font-weight:400;letter-spacing:0.218px;white-space:nowrap;-webkit-text-stroke:0.3px #0b0b0b;">Allergener: fisk, sesam, soja</span></article><div style="position:absolute;left:1854px;top:2027px;width:157px;height:72px;box-sizing:border-box;border:2px solid #dcd2c2;border-radius:12px;background:#f3f2ef"></div><span id="t98" class="s" style="position:absolute;left:1889.20px;top:2042.70px;font-size:28px;line-height:40px;color:#0b0b0b;font-weight:400;letter-spacing:1.626px;white-space:nowrap;-webkit-text-stroke:0.3px #0b0b0b;">Avbryt</span><div style="position:absolute;left:2027px;top:2027px;width:219px;height:72px;border-radius:12px;background:#c4a25e"></div><span id="t99" class="s" style="position:absolute;left:2059.00px;top:2042.70px;font-size:28px;line-height:40px;color:#0b0b0b;font-weight:400;letter-spacing:0.301px;white-space:nowrap;-webkit-text-stroke:0.3px #0b0b0b;">Spara Meny</span><div style="position:absolute;left:2294px;top:115px;width:16px;height:2034px;background:#f5f4f1"></div><div style="position:absolute;left:2294px;top:674px;width:16px;height:1473px;background:#2c5e5c;border-radius:8px"></div></div></div>
<script>(function(){var w=window.innerWidth;if(w&&Math.abs(w-3600)>2){document.documentElement.style.zoom=String(w/3600);}})();</script>
</body></html>
